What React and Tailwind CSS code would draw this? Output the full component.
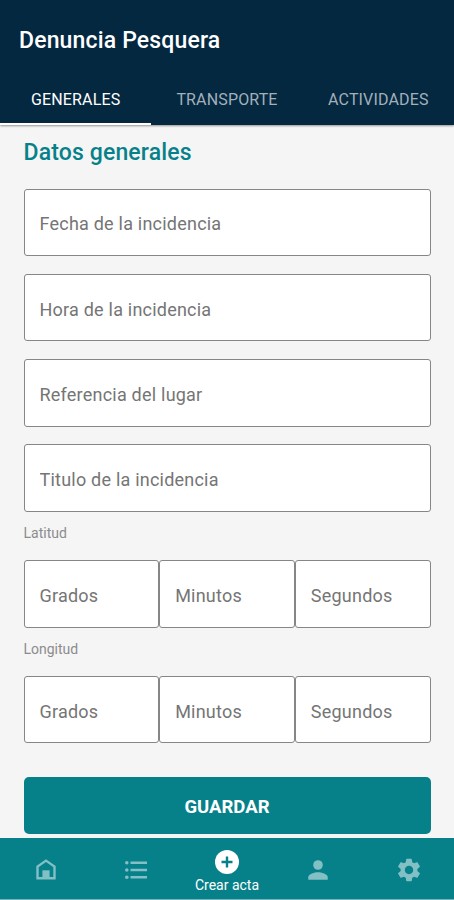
import { useState } from 'react'
import { MdSettings } from 'react-icons/md'

const tabs = ['GENERALES', 'TRANSPORTE', 'ACTIVIDADES']

const initialData = {
  fecha: '',
  hora: '',
  referencia: '',
  titulo: '',
  latGrados: '',
  latMinutos: '',
  latSegundos: '',
  lonGrados: '',
  lonMinutos: '',
  lonSegundos: '',
}

function Field({ name, label, value, onChange }) {
  return (
    <input
      type="text"
      name={name}
      value={value}
      onChange={onChange}
      placeholder={label}
      aria-label={label}
      className="block h-[67.5px] w-full min-w-0 rounded-[3px] border border-[#868686] bg-white px-[15px] pt-[3px] text-[18px] tracking-[0.22px] text-gray-900 placeholder:text-[#757575] outline-none"
    />
  )
}

function HomeIcon() {
  return (
    <svg className="ml-px h-[21px] w-5" viewBox="0 0 20 21" fill="none">
      <path d="M1.5 19.3V7.6L10 1.6l8.5 6v11.7z" stroke="currentColor" strokeWidth="2.4" />
      <path d="M6.4 11.3h7.2V20H6.4z" fill="currentColor" />
    </svg>
  )
}

function ListIcon() {
  return (
    <svg className="h-5 w-[22px]" viewBox="0 0 22 20" fill="currentColor">
      <circle cx="1.8" cy="2.8" r="1.8" />
      <circle cx="1.8" cy="10" r="1.8" />
      <circle cx="1.8" cy="17.2" r="1.8" />
      <path d="M5.5 1.5H22v2.5H5.5zM5.5 8.7H22v2.5H5.5zM5.5 15.9H22v2.5H5.5z" />
    </svg>
  )
}

function PlusIcon() {
  return (
    <svg className="h-6 w-6" viewBox="0 0 24 24" fill="none">
      <circle cx="12" cy="12" r="12" fill="currentColor" />
      <path d="M12 6.5v11M6.5 12h11" stroke="#06818a" strokeWidth="2.4" />
    </svg>
  )
}

function PersonIcon() {
  return (
    <svg className="h-5 w-5" viewBox="0 0 20 20" fill="currentColor">
      <circle cx="10" cy="5" r="4.8" />
      <path d="M0.3 19.7v-2.4c0-3.2 6.4-5 9.7-5s9.7 1.8 9.7 5v2.4z" />
    </svg>
  )
}

export default function App() {
  const [activeTab, setActiveTab] = useState(tabs[0])
  const [formData, setFormData] = useState(initialData)

  const handleChange = (e) => {
    const { name, value } = e.target
    setFormData((prev) => ({ ...prev, [name]: value }))
  }

  const field = (name, label) => (
    <Field name={name} label={label} value={formData[name]} onChange={handleChange} />
  )

  return (
    <div className="flex h-screen flex-col overflow-hidden bg-[#f5f5f5] font-['Roboto',sans-serif]">
      <header className="h-[125px] shrink-0 bg-[#032840] shadow-[0_1px_2px_rgba(0,0,0,0.4)]">
        <h1 className="flex h-[74px] items-center pt-[8px] pl-[19px] text-[23px] font-medium tracking-[0.16px] text-white">
          Denuncia Pesquera
        </h1>
        <nav className="grid h-[51px] grid-cols-3">
          {tabs.map((tab) => (
            <button
              key={tab}
              type="button"
              onClick={() => setActiveTab(tab)}
              className={`border-b-2 pt-[3px] text-[16px] tracking-[0.15px] ${
                tab === activeTab ? 'border-white text-white' : 'border-transparent text-[#a3b0bb]'
              }`}
            >
              {tab}
            </button>
          ))}
        </nav>
      </header>

      <main className="flex min-h-0 flex-1 flex-col px-[23.5px]">
        <h2 className="mt-[11px] h-[52.5px] pt-px text-[23px] leading-8 font-medium tracking-[0.14px] text-[#06818a]">
          Datos generales
        </h2>
        <form onSubmit={(e) => e.preventDefault()}>
          <div className="flex flex-col gap-[17.8px]">
            {field('fecha', 'Fecha de la incidencia')}
            {field('hora', 'Hora de la incidencia')}
            {field('referencia', 'Referencia del lugar')}
            {field('titulo', 'Titulo de la incidencia')}
          </div>

          <p className="h-[48.4px] pt-[11px] text-[14px] leading-5 text-[#8c8c8c]">Latitud</p>
          <div className="grid grid-cols-3">
            {field('latGrados', 'Grados')}
            {field('latMinutos', 'Minutos')}
            {field('latSegundos', 'Segundos')}
          </div>

          <p className="h-[48.1px] pt-[11px] text-[14px] leading-5 text-[#8c8c8c]">Longitud</p>
          <div className="grid grid-cols-3">
            {field('lonGrados', 'Grados')}
            {field('lonMinutos', 'Minutos')}
            {field('lonSegundos', 'Segundos')}
          </div>

          <button
            type="submit"
            className="mt-[33.5px] h-[57px] w-full rounded-[5px] bg-[#06818a] pt-1 text-[18.5px] font-bold text-white"
          >
            GUARDAR
          </button>
        </form>
      </main>

      <nav className="grid h-[62px] shrink-0 grid-cols-5 border-b border-[#75b5ba] bg-[#06818a] text-[#82c0c5]">
        <button type="button" aria-label="Inicio" className="flex items-center justify-center pt-[2px]">
          <HomeIcon />
        </button>
        <button type="button" aria-label="Lista" className="flex items-center justify-center pt-[2px]">
          <ListIcon />
        </button>
        <button type="button" className="flex flex-col items-center pt-3 text-white">
          <PlusIcon />
          <span className="text-[14px] leading-[22px] whitespace-nowrap">Crear acta</span>
        </button>
        <button type="button" aria-label="Perfil" className="flex items-center justify-center pt-[2px]">
          <PersonIcon />
        </button>
        <button type="button" aria-label="Ajustes" className="flex items-center justify-center pt-[2px]">
          <MdSettings className="h-[28px] w-[28px]" />
        </button>
      </nav>
    </div>
  )
}
